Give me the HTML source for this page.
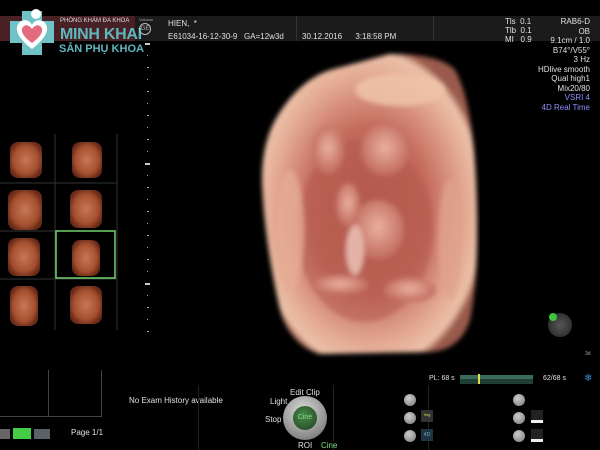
<!DOCTYPE html>
<html><head><meta charset="utf-8"><style>
*{margin:0;padding:0;box-sizing:border-box}
body{width:600px;height:450px;background:#000;overflow:hidden;position:relative;font-family:"Liberation Sans",sans-serif;color:#ddd}
.a{position:absolute;white-space:nowrap}
.t{font-size:8px;color:#e0e0e0}
.btn{position:absolute;width:12px;height:12px;border-radius:50%;background:radial-gradient(circle at 40% 35%,#ccc,#777);}
</style></head><body>
<div class="a" style="left:0;top:16px;width:600px;height:25px;background:#1b1b1b"></div>
<div class="a" style="left:0;top:16px;width:135px;height:25px;background:#5a2428;opacity:.7"></div>
<div class="a" style="left:296px;top:16px;width:1px;height:25px;background:#333"></div>
<div class="a" style="left:433px;top:16px;width:1px;height:25px;background:#333"></div>
<!-- logo -->
<svg class="a" style="left:6px;top:5px" width="52" height="52" viewBox="0 0 52 52">
<path d="M16 6h20v10h12v22H36v12H16V38H4V16h12z" fill="#6fc3c7"/>
<path d="M26 44 C10 32 8 22 14 17 C19 13 24 16 26 20 C28 16 33 13 38 17 C44 22 42 32 26 44z" fill="#fff"/>
<path d="M26 38 C15 30 14 24 18 21 C21 19 24 21 26 24 C28 21 31 19 34 21 C38 24 37 30 26 38z" fill="#e36b80"/>
<circle cx="30" cy="9" r="5" fill="#fff"/>
</svg>
<div class="a" style="left:60px;top:18px;font-size:6px;color:#ddd">PHÒNG KHÁM ĐA KHOA</div>
<div class="a" style="left:60px;top:26px;font-size:16px;font-weight:bold;color:#5fb7bf;letter-spacing:-.3px">MINH KHAI</div>
<div class="a" style="left:59px;top:43px;font-size:11px;font-weight:bold;color:#5fb7bf">SẢN PHỤ KHOA</div>
<div class="a" style="left:139px;top:17px;font-size:4px;color:#aaa">Voluson</div>
<div class="a" style="left:139px;top:23px;width:12px;height:12px;border-radius:50%;border:1px solid #bbb;font-size:6px;text-align:center;line-height:10px;color:#bbb">GE</div>
<div class="a t" style="left:168px;top:19px">HIEN,&nbsp;&nbsp;*</div>
<div class="a t" style="left:168px;top:32px">E61034-16-12-30-9&nbsp;&nbsp; GA=12w3d</div>
<div class="a t" style="left:302px;top:32px">30.12.2016&nbsp;&nbsp;&nbsp;&nbsp;&nbsp; 3:18:58 PM</div>
<div class="a t" style="left:505px;top:17px;line-height:9px">Tls&nbsp; 0.1<br>Tlb&nbsp; 0.1<br>MI&nbsp;&nbsp; 0.9</div>
<div class="a t" style="right:10px;top:17px;text-align:right;line-height:9.5px">RAB6-D<br>OB<br>9.1cm / 1.0<br>B74°/V55°<br>3 Hz<br>HDlive smooth<br>Qual high1<br>Mix20/80<br><span style="color:#8f8fff">VSRI 4</span><br><span style="color:#8f8fff">4D Real Time</span></div>
<!-- scale -->
<svg class="a" style="left:144px;top:40px" width="8" height="300">
<g fill="#ccc"><rect x="1" y="3" width="5" height="2"/><rect x="1" y="123" width="5" height="2"/><rect x="1" y="243" width="5" height="2"/></g>
<g fill="#aaa">
<rect x="3" y="15" width="1" height="1"/><rect x="3" y="27" width="2" height="1"/><rect x="3" y="39" width="1" height="1"/><rect x="3" y="51" width="2" height="1"/><rect x="3" y="63" width="1" height="1"/><rect x="3" y="75" width="2" height="1"/><rect x="3" y="87" width="1" height="1"/><rect x="3" y="99" width="2" height="1"/><rect x="3" y="111" width="1" height="1"/>
<rect x="3" y="135" width="1" height="1"/><rect x="3" y="147" width="2" height="1"/><rect x="3" y="159" width="1" height="1"/><rect x="3" y="171" width="2" height="1"/><rect x="3" y="183" width="1" height="1"/><rect x="3" y="195" width="2" height="1"/><rect x="3" y="207" width="1" height="1"/><rect x="3" y="219" width="2" height="1"/><rect x="3" y="231" width="1" height="1"/>
<rect x="3" y="255" width="1" height="1"/><rect x="3" y="267" width="2" height="1"/><rect x="3" y="279" width="1" height="1"/><rect x="3" y="291" width="2" height="1"/></g>
</svg>
<!-- main volume -->
<svg class="a" style="left:250px;top:40px" width="230" height="320" viewBox="0 0 230 320">
<defs>
<radialGradient id="g1" cx="50%" cy="52%" r="55%"><stop offset="0" stop-color="#b85c50"/><stop offset=".5" stop-color="#c46a5c"/><stop offset=".8" stop-color="#e2a791"/><stop offset=".95" stop-color="#ecc1a8"/><stop offset="1" stop-color="#9a5a4c"/></radialGradient>
<radialGradient id="g2" cx="50%" cy="45%" r="55%"><stop offset="0" stop-color="#eab0a0"/><stop offset="1" stop-color="#c06a5c"/></radialGradient>
<filter id="b"><feGaussianBlur stdDeviation="2.5"/></filter>
</defs>
<path filter="url(#b)" d="M28 75 Q50 40 80 30 L140 14 Q190 14 205 30 Q222 60 226 140 Q230 230 220 280 Q210 310 180 312 L70 314 Q40 305 30 270 Q14 200 12 140 Q12 100 28 75 Z" fill="url(#g1)"/>
<g filter="url(#b)">
<ellipse cx="115" cy="190" rx="68" ry="92" fill="#b0584c" opacity=".5"/>
<ellipse cx="135" cy="110" rx="24" ry="26" fill="url(#g2)"/>
<ellipse cx="78" cy="110" rx="16" ry="24" fill="url(#g2)"/>
<ellipse cx="128" cy="190" rx="26" ry="30" fill="url(#g2)"/>
<ellipse cx="98" cy="165" rx="12" ry="22" fill="url(#g2)"/>
<ellipse cx="105" cy="210" rx="9" ry="25" fill="#e4b3a8"/>
<ellipse cx="90" cy="245" rx="28" ry="10" fill="url(#g2)"/>
<ellipse cx="160" cy="250" rx="26" ry="12" fill="url(#g2)"/>
<ellipse cx="150" cy="50" rx="45" ry="16" fill="#efc4a8" opacity=".85"/>
<ellipse cx="40" cy="190" rx="14" ry="60" fill="#e6ad95" opacity=".8"/>
<ellipse cx="200" cy="200" rx="12" ry="60" fill="#e0a38d" opacity=".8"/>
</g>
</svg>
<!-- thumbnails -->
<svg class="a" style="left:0;top:134px" width="120" height="196">
<defs><radialGradient id="tg" cx="50%" cy="50%" r="55%"><stop offset="0" stop-color="#c57856"/><stop offset=".7" stop-color="#a5502f"/><stop offset="1" stop-color="#6a2a18"/></radialGradient></defs>
<g fill="url(#tg)">
<rect x="10" y="8" width="32" height="36" rx="8"/><rect x="72" y="8" width="30" height="36" rx="8"/>
<rect x="8" y="56" width="34" height="40" rx="8"/><rect x="70" y="56" width="32" height="38" rx="8"/>
<rect x="8" y="104" width="32" height="38" rx="8"/><rect x="72" y="106" width="28" height="36" rx="8"/>
<rect x="10" y="152" width="28" height="40" rx="8"/><rect x="70" y="152" width="32" height="38" rx="8"/>
</g>
<g stroke="#333" stroke-width="1"><line x1="0" y1="49" x2="117" y2="49"/><line x1="0" y1="97" x2="117" y2="97"/><line x1="0" y1="145" x2="117" y2="145"/><line x1="55" y1="0" x2="55" y2="196"/><line x1="117" y1="0" x2="117" y2="196"/></g>
<rect x="56" y="97" width="59" height="47" fill="none" stroke="#6fd36f" stroke-width="1.5"/>
</svg>
<!-- bottom left boxes -->
<div class="a" style="left:0;top:370px;width:102px;height:47px;border-right:1px solid #444;border-bottom:1px solid #444"></div>
<div class="a" style="left:48px;top:370px;width:1px;height:47px;background:#444"></div>
<div class="a" style="left:0;top:429px;width:10px;height:10px;background:#666"></div>
<div class="a" style="left:13px;top:428px;width:18px;height:11px;background:#44cc44"></div>
<div class="a" style="left:34px;top:429px;width:16px;height:10px;background:#5a6268"></div>
<div class="a t" style="left:71px;top:428px">Page 1/1</div>
<div class="a t" style="left:129px;top:396px">No Exam History available</div>
<div class="a" style="left:198px;top:385px;width:1px;height:65px;background:#222"></div>
<div class="a" style="left:333px;top:385px;width:1px;height:65px;background:#222"></div>
<div class="a" style="left:428px;top:385px;width:1px;height:65px;background:#222"></div>
<!-- wheel -->
<div class="a" style="left:283px;top:396px;width:44px;height:44px;border-radius:50%;background:radial-gradient(circle at 45% 35%,#ddd,#888 70%,#555)"></div>
<div class="a" style="left:293px;top:406px;width:24px;height:24px;border-radius:50%;background:radial-gradient(circle at 45% 40%,#4a8a4a,#1f3f1f);font-size:7px;color:#7fdf7f;text-align:center;line-height:24px">Cine</div>
<div class="a t" style="left:290px;top:388px">Edit Clip</div>
<div class="a t" style="left:270px;top:397px">Light</div>
<div class="a t" style="left:265px;top:415px">Stop</div>
<div class="a t" style="left:298px;top:441px">ROI</div>
<div class="a t" style="left:321px;top:441px;color:#7fdf7f">Cine</div>
<!-- buttons -->
<div class="btn" style="left:404px;top:394px"></div><div class="btn" style="left:404px;top:412px"></div><div class="btn" style="left:404px;top:430px"></div>
<div class="a" style="left:421px;top:410px;width:12px;height:12px;background:#333;font-size:4px;color:#dd4;text-align:center;line-height:10px">Img</div>
<div class="a" style="left:421px;top:429px;width:12px;height:12px;background:#1e3440;font-size:5px;color:#7ac;text-align:center;line-height:12px">4D</div>
<div class="btn" style="left:513px;top:394px"></div><div class="btn" style="left:513px;top:412px"></div><div class="btn" style="left:513px;top:430px"></div>
<div class="a" style="left:531px;top:410px;width:12px;height:13px;background:#222;border-bottom:3px solid #eee"></div>
<div class="a" style="left:531px;top:429px;width:12px;height:13px;background:#222;border-bottom:3px solid #eee"></div>
<!-- cine bar -->
<div class="a t" style="left:429px;top:375px;font-size:7px">PL: 68 s</div>
<div class="a" style="left:460px;top:375px;width:73px;height:9px;background:#1f3f35;border-top:4px solid #3a6a5a"></div>
<div class="a" style="left:478px;top:374px;width:2px;height:10px;background:#dde04a"></div>
<div class="a t" style="left:543px;top:375px;font-size:7px">62/68 s</div>
<div class="a" style="left:584px;top:373px;font-size:10px;color:#3a8ac8">❄</div>
<div class="a" style="left:548px;top:313px;width:24px;height:24px;border-radius:50%;background:radial-gradient(#555,#222)"></div>
<div class="a" style="left:549px;top:313px;width:8px;height:8px;border-radius:50%;background:#3fc43f"></div>
<div class="a" style="left:585px;top:351px;font-size:5px;color:#aaa">3d</div>
</body></html>
